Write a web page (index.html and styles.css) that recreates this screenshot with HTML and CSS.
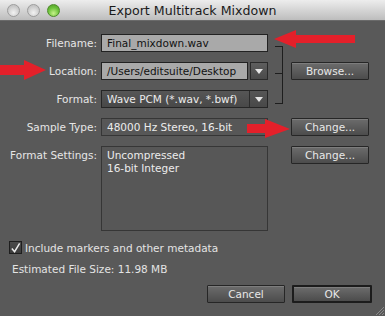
FILE: index.html
```html
<!DOCTYPE html>
<html lang="en">
<head>
  <meta charset="UTF-8" />
  <title>Export Multitrack Mixdown</title>
  <link rel="stylesheet" href="styles.css">
</head>
<body>

  <div class="window">
    <div class="titlebar">
      <div class="lights">
        <span class="light"></span>
        <span class="light"></span>
        <span class="light green"></span>
      </div>
      <div class="title">Export Multitrack Mixdown</div>
    </div>

    <div class="form">
      <label class="label r1">Filename:</label>
      <div class="field light-field r1">Final_mixdown.wav</div>

      <label class="label r2">Location:</label>
      <div class="combo r2">
        <div class="field light-field combo-text">/Users/editsuite/Desktop</div>
        <div class="combo-btn"><span class="tri"></span></div>
      </div>
      <button class="btn r2 c4">Browse...</button>

      <label class="label r3">Format:</label>
      <div class="combo dark-combo r3">
        <div class="combo-text">Wave PCM (*.wav, *.bwf)</div>
        <div class="combo-btn"><span class="tri"></span></div>
      </div>

      <div class="bracket"></div>

      <label class="label r4">Sample Type:</label>
      <div class="field dark-field r4">48000 Hz Stereo, 16-bit</div>
      <button class="btn r4 c4">Change...</button>

      <label class="label r5 top">Format Settings:</label>
      <div class="field dark-field area r5">Uncompressed<br>16-bit Integer</div>
      <button class="btn r5 c4 top">Change...</button>
    </div>

    <div class="check-row">
      <span class="checkbox">
        <svg width="12" height="12" viewBox="0 0 12 12"><path d="M2 6.5 L5 10 L10.5 1" fill="none" stroke="#ececec" stroke-width="1.6"/></svg>
      </span>
      <span>Include markers and other metadata</span>
    </div>

    <div class="size">Estimated File Size: 11.98 MB</div>

    <div class="footer">
      <button class="btn">Cancel</button>
      <button class="btn default">OK</button>
    </div>

    <svg class="grip" width="10" height="10" viewBox="0 0 10 10">
      <path d="M10 2 L2 10 M10 5 L5 10 M10 8 L8 10" stroke="#8a8a8a" stroke-width="1"/>
    </svg>

    <!-- red arrows -->
    <svg class="arrow arrow-filename" width="82" height="20" viewBox="0 0 82 20">
      <polygon points="0,10 22,1 22,6 81,6 81,14 22,14 22,19" fill="#e4202a"/>
    </svg>
    <svg class="arrow arrow-location" width="47" height="22" viewBox="0 0 47 22">
      <polygon points="46,11 24,1 24,6 0,6 0,16 24,16 24,21" fill="#e4202a"/>
    </svg>
    <svg class="arrow arrow-sample" width="44" height="20" viewBox="0 0 44 20">
      <polygon points="43,10 18,0 18,5 0,5 0,14 18,14 18,19" fill="#e4202a"/>
    </svg>
  </div>

</body>
</html>
```

FILE: styles.css
```css
body {
  margin: 0;
  font-family: 'DejaVu Sans', sans-serif;
  font-size: 10.5px;
  background-color: #595959;
  color: #e4e4e4;
}

.window {
  position: relative;
  width: 385px;
  height: 316px;
  overflow: hidden;
  background-color: #595959;
}

.titlebar {
  height: 21px;
  background: linear-gradient(#ededed, #bdbdbd);
  border-bottom: 1px solid #6a6a6a;
  box-sizing: border-box;
  display: flex;
  align-items: center;
  position: relative;
}

.lights {
  display: flex;
  gap: 7px;
  padding-left: 7px;
}

.light {
  width: 13px;
  height: 13px;
  border-radius: 50%;
  box-sizing: border-box;
  border: 1px solid #9c9c9c;
  background: radial-gradient(circle at 50% 70%, #f2f2f2, #c6c6c6 70%);
}

.light.green {
  border-color: #4d8a2a;
  background: radial-gradient(circle at 50% 75%, #c6f28a, #6cc23a 55%, #4f9a24);
}

.title {
  flex: 1;
  text-align: center;
  font-size: 12.6px;
  color: #1a1a1a;
  margin-left: -60px;
  padding-top: 1px;
}

/* Form grid */
.form {
  display: grid;
  grid-template-columns: 101px 167px 23px 78px;
  grid-template-rows: 18px 18px 18px 18px 85px;
  row-gap: 10px;
  margin-top: 13px;
}

.r1 { grid-row: 1; }
.r2 { grid-row: 2; }
.r3 { grid-row: 3; }
.r4 { grid-row: 4; }
.r5 { grid-row: 5; }
.c4 { grid-column: 4; }

.label {
  grid-column: 1;
  text-align: right;
  padding-right: 4px;
  line-height: 18px;
  color: #e6e6e6;
}

.label.top {
  line-height: 13px;
  padding-top: 3px;
}

.field {
  grid-column: 2;
  box-sizing: border-box;
  border: 1px solid #222;
  padding: 0 5px;
  line-height: 16px;
  white-space: nowrap;
  overflow: hidden;
}

.light-field {
  background-color: #a9a9a9;
  color: #111;
}

.dark-field {
  background-color: #575757;
  border-color: #363636;
  color: #ececec;
}

.field.area {
  line-height: 13px;
  padding-top: 2px;
}

.combo {
  grid-column: 2;
  display: flex;
  gap: 2px;
}

.combo .combo-text {
  flex: 1;
}

.combo-btn {
  width: 18px;
  box-sizing: border-box;
  border: 1px solid #2a2a2a;
  background: linear-gradient(#5e5e5e, #4a4a4a);
  display: flex;
  align-items: center;
  justify-content: center;
}

.dark-combo {
  gap: 0;
  border: 1px solid #262626;
  background: linear-gradient(#565656, #484848);
  box-sizing: border-box;
}

.dark-combo .combo-text {
  padding: 0 5px;
  line-height: 16px;
  color: #ececec;
  white-space: nowrap;
  border-right: 1px solid #2c2c2c;
}

.dark-combo .combo-btn {
  border: none;
  background: none;
  width: 17px;
}

.tri {
  width: 0;
  height: 0;
  border-left: 4px solid transparent;
  border-right: 4px solid transparent;
  border-top: 5px solid #e6e6e6;
}

.bracket {
  grid-column: 3;
  grid-row: 1 / 4;
  position: relative;
  margin: 12px 8px 4px 7px;
  border: 1px solid #1e1e1e;
  border-left: none;
}

.bracket::after {
  content: "";
  position: absolute;
  left: 0;
  right: 0;
  top: 26px;
  border-top: 1px solid #1e1e1e;
}

.btn {
  font-family: 'DejaVu Sans', sans-serif;
  font-size: 10.5px;
  color: #e8e8e8;
  height: 18px;
  padding: 0;
  border: 1px solid #262626;
  border-radius: 1px;
  background: linear-gradient(#6c6c6c, #4c4c4c);
  box-shadow: inset 0 1px 0 rgba(255, 255, 255, 0.12);
  cursor: pointer;
}

.btn.top {
  align-self: start;
}

/* Bottom area */
.check-row {
  display: flex;
  align-items: center;
  gap: 3px;
  margin-top: 10px;
  padding-left: 9px;
  height: 13px;
}

.checkbox {
  width: 13px;
  height: 13px;
  box-sizing: border-box;
  border: 1px solid #1e1e1e;
  background: linear-gradient(#4a4a4a, #3c3c3c);
  display: flex;
  align-items: center;
  justify-content: center;
}

.size {
  margin-top: 8px;
  padding-left: 12px;
  line-height: 14px;
}

.footer {
  display: flex;
  justify-content: flex-end;
  gap: 7px;
  margin-top: 9px;
  padding-right: 13px;
}

.footer .btn {
  width: 78px;
}

.footer .btn.default {
  width: 80px;
  border: 2px solid #1c1c1c;
}

.grip {
  position: absolute;
  right: 1px;
  bottom: 1px;
}

.arrow {
  position: absolute;
}

.arrow-filename {
  left: 274px;
  top: 29px;
}

.arrow-location {
  left: 0;
  top: 59px;
}

.arrow-sample {
  left: 247px;
  top: 119px;
}
```
